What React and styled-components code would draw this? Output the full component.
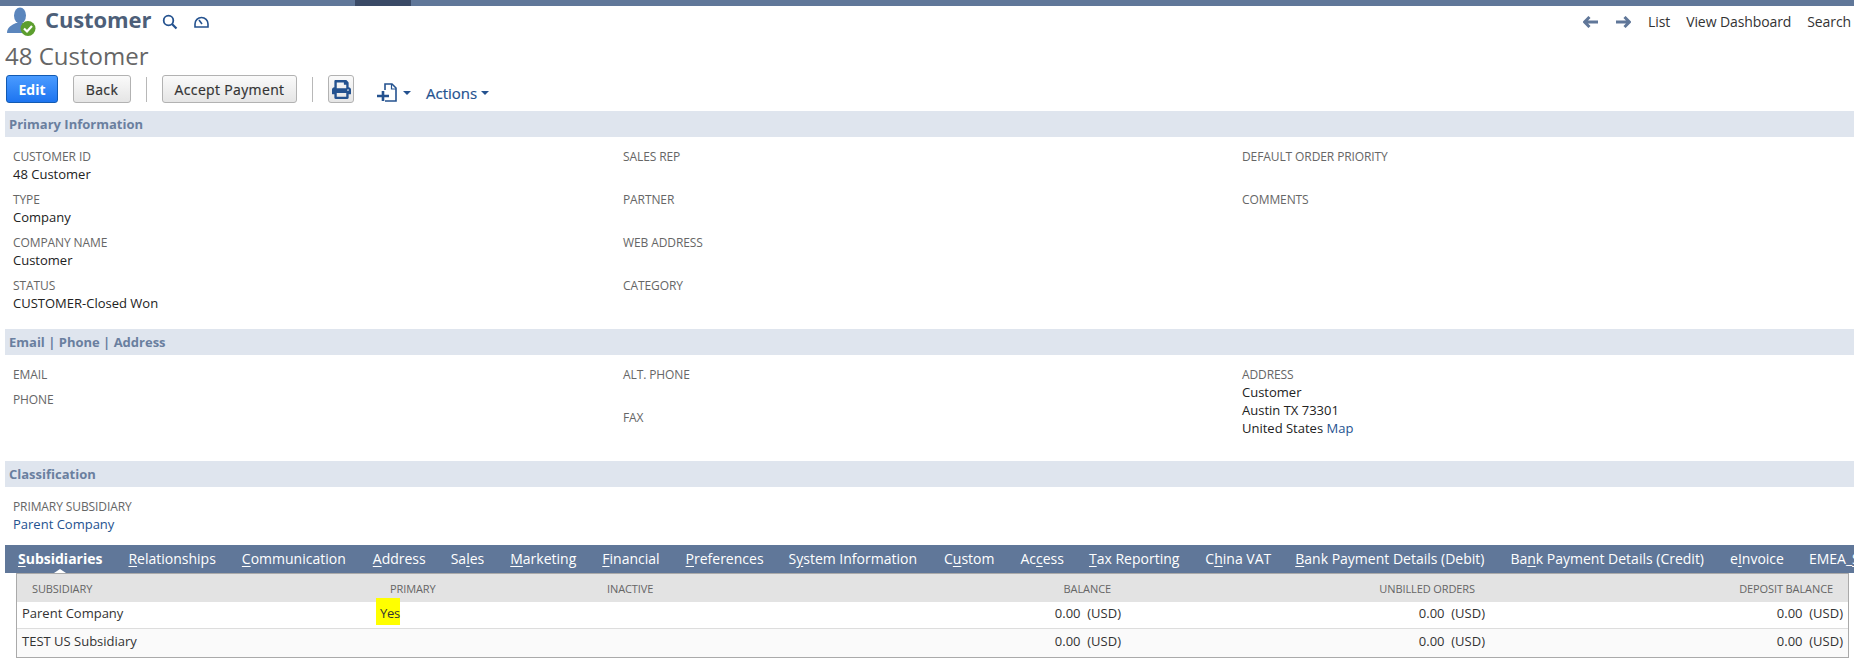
import React from "react";
import styled, { createGlobalStyle } from "styled-components";
import { FaPrint } from "react-icons/fa";

const GlobalStyle = createGlobalStyle`
  html, body {
    margin: 0;
    padding: 0;
    background: #fff;
    overflow: hidden;
  }
  body {
    font-family: "Open Sans", "Liberation Sans", sans-serif;
    font-size: 13px;
    color: #333;
  }
`;

const Page = styled.div`
  width: 1854px;
  height: 664px;
  overflow: hidden;
`;

const TopBar = styled.div`
  height: 6px;
  background: #607799;
  display: flex;
  padding-left: 355px;
`;

const TopBarActive = styled.div`
  width: 56px;
  background: #3a4a66;
`;

const TitleRow = styled.div`
  height: 31px;
  padding: 0 3px 0 6px;
  display: flex;
  align-items: center;
`;

const RecordType = styled.h1`
  margin: 0 0 6px 9px;
  font-size: 22px;
  line-height: 26px;
  font-weight: 700;
  letter-spacing: -0.1px;
  color: #4d5f79;
`;

const TitleIcon = styled.svg`
  display: block;
  margin-left: ${(p) => p.$gap}px;
  flex: none;
`;

const NavLinks = styled.nav`
  margin-left: auto;
  display: flex;
  align-items: center;
  color: #333;
`;

const NavArrow = styled.svg`
  display: block;
  margin-right: ${(p) => p.$gap}px;
`;

const NavLink = styled.a`
  margin-left: ${(p) => p.$gap || 0}px;
  font-size: 14px;
  letter-spacing: -0.1px;
  white-space: nowrap;
`;

const RecordName = styled.div`
  height: 36px;
  padding-left: 5px;
  font-size: 24px;
  line-height: 38px;
  color: #666;
`;

const Toolbar = styled.div`
  margin-top: 2px;
  height: 36px;
  padding-left: 6px;
  display: flex;
  align-items: flex-start;
`;

const Button = styled.button`
  height: 28px;
  width: ${(p) => p.$width}px;
  margin-right: ${(p) => p.$gap}px;
  padding: 0;
  font: ${(p) => (p.$primary ? 700 : 400)} 14px "Open Sans", sans-serif;
  letter-spacing: ${(p) => (p.$primary ? 0 : 0.35)}px;
  -webkit-text-stroke: ${(p) => (p.$primary ? 0 : 0.2)}px;
  border-radius: 3px;
  border: 1px solid ${(p) => (p.$primary ? "#125ab2" : "#b2b2b2")};
  color: ${(p) => (p.$primary ? "#fff" : "#333")};
  background: ${(p) =>
    p.$primary
      ? "linear-gradient(#4a9bff, #1d74f0)"
      : "linear-gradient(#fafafa, #e5e5e5)"};
  display: flex;
  align-items: center;
  justify-content: center;
`;

const ToolbarSep = styled.div`
  width: 1px;
  height: 25px;
  margin: 2px 15px 0 0;
  background: #b8b8b8;
`;

const NewMenu = styled.div`
  margin: 8px 0 0 23px;
  display: flex;
  align-items: center;
  gap: 5px;
`;

const ActionsMenu = styled.div`
  margin: 8px 0 0 15px;
  display: flex;
  align-items: center;
  gap: 4px;
  font-size: 15px;
  font-weight: 400;
  line-height: 20px;
  color: #24528f;
  -webkit-text-stroke: 0.2px #24528f;
`;

const Caret = styled.span`
  width: 0;
  height: 0;
  border-left: 4px solid transparent;
  border-right: 4px solid transparent;
  border-top: 4px solid #24528f;
`;

const SectionBar = styled.h2`
  margin: 0 0 0 5px;
  height: 26px;
  padding-left: 4px;
  background: #dfe5ee;
  font-size: 13px;
  line-height: 26px;
  font-weight: 700;
  color: #6a7f9f;
`;

const FieldGrid = styled.div`
  display: grid;
  grid-template-columns: 610px 619px 1fr;
  padding: ${(p) => p.$top}px 0 0 13px;
  height: ${(p) => p.$height}px;
  box-sizing: border-box;
`;

const FieldColumn = styled.div`
  display: flex;
  flex-direction: column;
`;

const Field = styled.div`
  height: ${(p) => p.$height || 43}px;
`;

const FieldLabel = styled.div`
  font-size: 12px;
  line-height: 18px;
  color: #666;
  text-transform: uppercase;
  letter-spacing: -0.1px;
`;

const FieldValue = styled.div`
  font-size: 13px;
  line-height: 18px;
  color: #222;

  ${FieldLabel} + & {
    margin-top: -1px;
  }
`;

const FieldLink = styled.a`
  color: #24528f;
`;

const TabBar = styled.div`
  margin: 0 0 0 5px;
  height: 28px;
  padding-left: 13px;
  background: #607799;
  display: flex;
  overflow: hidden;
`;

const Tab = styled.a`
  position: relative;
  margin-right: ${(p) => p.$gap}px;
  font-size: 14px;
  line-height: 28px;
  white-space: nowrap;
  color: #fff;
  font-weight: ${(p) => (p.$active ? 700 : 400)};
  flex: none;

  u {
    text-underline-offset: 2px;
  }

  ${(p) =>
    p.$active &&
    `&::after {
      content: "";
      position: absolute;
      left: 50%;
      bottom: 0;
      margin-left: -6px;
      border-left: 6px solid transparent;
      border-right: 6px solid transparent;
      border-bottom: 4px solid #fff;
    }`}
`;

const Table = styled.div`
  margin: 0 0 0 16px;
  width: 1833px;
  height: 85px;
  border: 1px solid #aaa;
  box-sizing: border-box;
`;

const Row = styled.div`
  display: grid;
  grid-template-columns: 358px 217px 200px 334px 364px 358px;
  height: ${(p) => p.$height}px;
  align-items: center;
  background: ${(p) => p.$bg || "#fff"};
  border-bottom: ${(p) => (p.$line ? "1px solid #ddd" : "none")};
  box-sizing: border-box;
`;

const HeadCell = styled.div`
  font-size: 11px;
  color: #666;
  letter-spacing: -0.1px;
  text-transform: uppercase;
  text-align: ${(p) => (p.$right ? "right" : "left")};
  padding: ${(p) => (p.$right ? "0 15px 0 0" : "0 0 0 15px")};
`;

const Cell = styled.div`
  font-size: 13px;
  color: #333;
  text-align: ${(p) => (p.$right ? "right" : "left")};
  padding: ${(p) => (p.$right ? "0 5px 4px 0" : "0 0 4px 5px")};
  white-space: pre;
`;

const Highlight = styled.span`
  background: #ffff00;
  padding: 6px 0 3px 4px;
  margin-left: -4px;
  letter-spacing: -0.3px;
`;

const PersonIcon = () => (
  <svg width="30" height="30" viewBox="0 0 30 30" style={{ display: "block" }}>
    <ellipse cx="14" cy="8.5" rx="6" ry="8" fill="#5b86bd" />
    <path d="M1 26c0-6 5-8 9-10h8c3 1 5 2 6 4l-3 6H1z" fill="#5b86bd" />
    <circle cx="22" cy="21.5" r="7.5" fill="#5c9e2e" />
    <path d="M18 21.5l3 3 5-5.5" fill="none" stroke="#fff" strokeWidth="2.2" />
  </svg>
);

const tabs = [
  ["S", "ubsidiaries", 26, true],
  ["R", "elationships", 26],
  ["C", "ommunication", 27],
  ["A", "ddress", 25],
  ["", "Sa|l|es", 26],
  ["M", "arketing", 26],
  ["F", "inancial", 26],
  ["P", "references", 25],
  ["", "S|y|stem Information", 27],
  ["", "C|u|stom", 26],
  ["", "Ac|c|ess", 25],
  ["T", "ax Reporting", 26],
  ["", "C|h|ina VAT", 24],
  ["B", "ank Payment Details (Debit)", 26],
  ["", "Ba|n|k Payment Details (Credit)", 26],
  ["", "e|I|nvoice", 25],
  ["", "EMEA_|S|ettings", 0],
];

const subsidiaries = [
  { name: "Parent Company", primary: true, height: 27, line: true },
  { name: "TEST US Subsidiary", bg: "#fafafa", height: 28 },
];

const TabLabel = ({ first, rest }) => {
  if (first) {
    return (
      <>
        <u>{first}</u>
        {rest}
      </>
    );
  }
  const [a, b, c] = rest.split("|");
  return (
    <>
      {a}
      <u>{b}</u>
      {c}
    </>
  );
};

const App = () => {
  return (
    <Page>
      <GlobalStyle />
      <TopBar>
        <TopBarActive />
      </TopBar>
      <TitleRow>
        <PersonIcon />
        <RecordType>Customer</RecordType>
        <TitleIcon $gap={11} width="16" height="16" viewBox="0 0 16 16">
          <circle cx="6.5" cy="6.5" r="4.8" fill="none" stroke="#24528f" strokeWidth="1.8" />
          <path d="M10 10l4.5 4.5" stroke="#24528f" strokeWidth="2.2" />
        </TitleIcon>
        <TitleIcon $gap={16} width="15" height="12" viewBox="0 0 15 12">
          <path d="M1 11V8a6.5 6.5 0 0 1 13 0v3z" fill="none" stroke="#24528f" strokeWidth="1.6" />
          <path d="M5 4l3 4" stroke="#24528f" strokeWidth="1.5" />
        </TitleIcon>
        <NavLinks>
          <NavArrow $gap={18} width="15" height="12" viewBox="0 0 15 12">
            <path d="M6.5 1L1.5 6l5 5M2 6h13" fill="none" stroke="#607799" strokeWidth="3" />
          </NavArrow>
          <NavArrow $gap={17} width="15" height="12" viewBox="0 0 15 12">
            <path d="M8.5 1l5 5-5 5M13 6H0" fill="none" stroke="#607799" strokeWidth="3" />
          </NavArrow>
          <NavLink>List</NavLink>
          <NavLink $gap={16}>View Dashboard</NavLink>
          <NavLink $gap={16}>Search</NavLink>
        </NavLinks>
      </TitleRow>
      <RecordName>48 Customer</RecordName>
      <Toolbar>
        <Button $primary $width={52} $gap={15}>
          Edit
        </Button>
        <Button $width={58} $gap={15}>
          Back
        </Button>
        <ToolbarSep />
        <Button $width={135} $gap={15}>
          Accept Payment
        </Button>
        <ToolbarSep />
        <Button $width={26} $gap={0}>
          <FaPrint size={19} color="#24528f" />
        </Button>
        <NewMenu>
          <svg width="21" height="19" viewBox="0 0 21 19">
            <path d="M8 7V1h7l4 4v13H8" fill="none" stroke="#24528f" strokeWidth="1.6" />
            <path d="M14.5 1v5h4.5" fill="none" stroke="#24528f" strokeWidth="1.2" />
            <path d="M0 13h12M6 8v10" stroke="#24528f" strokeWidth="2.6" />
          </svg>
          <Caret />
        </NewMenu>
        <ActionsMenu>
          Actions
          <Caret />
        </ActionsMenu>
      </Toolbar>

      <SectionBar>Primary Information</SectionBar>
      <FieldGrid $top={11} $height={192}>
        <FieldColumn>
          <Field>
            <FieldLabel>Customer ID</FieldLabel>
            <FieldValue>48 Customer</FieldValue>
          </Field>
          <Field>
            <FieldLabel>Type</FieldLabel>
            <FieldValue>Company</FieldValue>
          </Field>
          <Field>
            <FieldLabel>Company Name</FieldLabel>
            <FieldValue>Customer</FieldValue>
          </Field>
          <Field>
            <FieldLabel>Status</FieldLabel>
            <FieldValue>CUSTOMER-Closed Won</FieldValue>
          </Field>
        </FieldColumn>
        <FieldColumn>
          <Field>
            <FieldLabel>Sales Rep</FieldLabel>
          </Field>
          <Field>
            <FieldLabel>Partner</FieldLabel>
          </Field>
          <Field>
            <FieldLabel>Web Address</FieldLabel>
          </Field>
          <Field>
            <FieldLabel>Category</FieldLabel>
          </Field>
        </FieldColumn>
        <FieldColumn>
          <Field>
            <FieldLabel>Default Order Priority</FieldLabel>
          </Field>
          <Field>
            <FieldLabel>Comments</FieldLabel>
          </Field>
        </FieldColumn>
      </FieldGrid>

      <SectionBar>Email | Phone | Address</SectionBar>
      <FieldGrid $top={11} $height={106}>
        <FieldColumn>
          <Field $height={25}>
            <FieldLabel>Email</FieldLabel>
          </Field>
          <Field>
            <FieldLabel>Phone</FieldLabel>
          </Field>
        </FieldColumn>
        <FieldColumn>
          <Field>
            <FieldLabel>Alt. Phone</FieldLabel>
          </Field>
          <Field>
            <FieldLabel>Fax</FieldLabel>
          </Field>
        </FieldColumn>
        <FieldColumn>
          <Field>
            <FieldLabel>Address</FieldLabel>
            <FieldValue>Customer</FieldValue>
            <FieldValue>Austin TX 73301</FieldValue>
            <FieldValue>
              United States <FieldLink>Map</FieldLink>
            </FieldValue>
          </Field>
        </FieldColumn>
      </FieldGrid>

      <SectionBar>Classification</SectionBar>
      <FieldGrid $top={11} $height={58}>
        <FieldColumn>
          <Field>
            <FieldLabel>Primary Subsidiary</FieldLabel>
            <FieldValue>
              <FieldLink>Parent Company</FieldLink>
            </FieldValue>
          </Field>
        </FieldColumn>
      </FieldGrid>

      <TabBar>
        {tabs.map(([first, rest, gap, active]) => (
          <Tab key={first + rest} $gap={gap} $active={active}>
            <TabLabel first={first} rest={rest} />
          </Tab>
        ))}
      </TabBar>
      <Table>
        <Row $height={28} $bg="#e3e3e3">
          <HeadCell>Subsidiary</HeadCell>
          <HeadCell>Primary</HeadCell>
          <HeadCell>Inactive</HeadCell>
          <HeadCell $right>Balance</HeadCell>
          <HeadCell $right>Unbilled Orders</HeadCell>
          <HeadCell $right>Deposit Balance</HeadCell>
        </Row>
        {subsidiaries.map((s) => (
          <Row key={s.name} $height={s.height} $bg={s.bg} $line={s.line}>
            <Cell>{s.name}</Cell>
            <Cell>{s.primary && <Highlight>Yes</Highlight>}</Cell>
            <Cell />
            <Cell $right>{"0.00  (USD)"}</Cell>
            <Cell $right>{"0.00  (USD)"}</Cell>
            <Cell $right>{"0.00  (USD)"}</Cell>
          </Row>
        ))}
      </Table>
    </Page>
  );
};

export default App;
